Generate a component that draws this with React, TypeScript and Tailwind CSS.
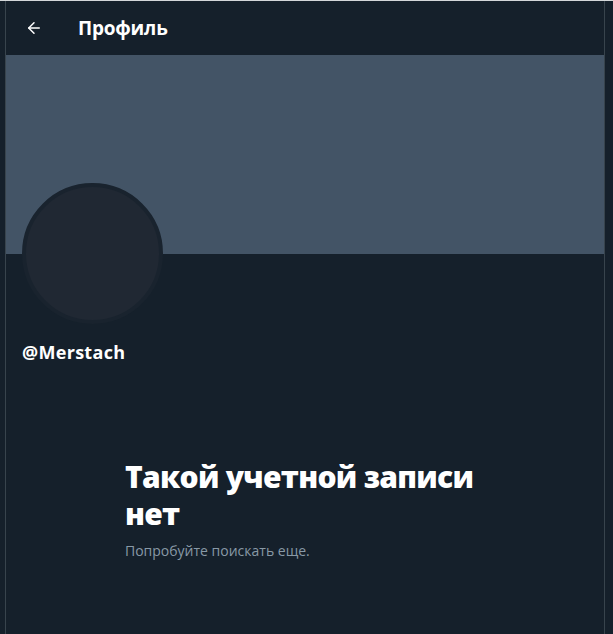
import { ArrowLeft } from "lucide-react";

export default function App() {
    return (
        <div className="min-h-[634px] bg-[#15202b] border-t border-[#d4d7da] pl-[5px] font-['Open_Sans','Liberation_Sans',sans-serif] text-[#d9d9d9]">
            <div className="w-[600px] min-h-[633px] border-x border-[#38444d]">
                {/* Header */}
                <div className="h-[54px] flex items-center px-4">
                    <div className="w-[40px] flex items-center justify-start pl-[3px]">
                        <ArrowLeft className="w-[18px] h-[18px] text-white" strokeWidth={2} />
                    </div>
                    <h1 className="ml-[16px] text-[19px] font-bold text-white tracking-[-0.2px]">Профиль</h1>
                </div>

                {/* Banner */}
                <div className="h-[199px] bg-[#435466]" />

                {/* Profile info */}
                <div className="px-4">
                    <div className="-mt-[71px] w-[141px] h-[141px] rounded-full border-[4px] border-[#19232e] bg-[#202833]" />
                    <div className="mt-[16px] text-[18px] font-bold text-white leading-[24px] tracking-[0.3px]">@Merstach</div>
                </div>

                {/* Empty state */}
                <div className="ml-[119px] w-[372px] mt-[94px]">
                    <h2 className="text-[30px] font-extrabold text-white leading-[37px] tracking-[-0.7px]">
                        Такой учетной записи нет
                    </h2>
                    <p className="mt-[8px] text-[14px] text-[#8899a6]">Попробуйте поискать еще.</p>
                </div>
            </div>
        </div>
    );
}
